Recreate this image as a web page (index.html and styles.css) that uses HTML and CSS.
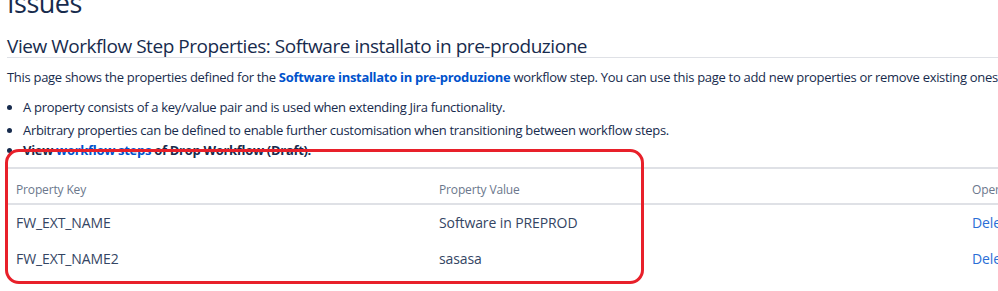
FILE: index.html
```html
<!DOCTYPE html>
<html lang="it">
<head>
<meta charset="utf-8">
<title>View Workflow Step Properties</title>
<link rel="stylesheet" href="styles.css">
</head>
<body>
<div class="page">
  <h1 class="page-title">Issues</h1>
  <h2 class="section-title">View Workflow Step Properties: Software installato in pre-produzione</h2>
  <p class="intro">This page shows the properties defined for the <a class="strong-link" href="#">Software installato in pre-produzione</a> workflow step. You can use this page to add new properties or remove existing ones.</p>
  <ul class="notes">
    <li>A property consists of a key/value pair and is used when extending Jira functionality.</li>
    <li>Arbitrary properties can be defined to enable further customisation when transitioning between workflow steps.</li>
    <li class="bold-note">View <a class="plain-link" href="#">workflow steps</a> of Drop Workflow (Draft).</li>
  </ul>
  <table class="props">
    <thead>
      <tr><th class="col-key">Property Key</th><th class="col-val">Property Value</th><th class="col-op">Operations</th></tr>
    </thead>
    <tbody>
      <tr><td>FW_EXT_NAME</td><td>Software in PREPROD</td><td><a class="op-link" href="#">Delete</a></td></tr>
      <tr><td>FW_EXT_NAME2</td><td>sasasa</td><td><a class="op-link" href="#">Delete</a></td></tr>
    </tbody>
  </table>
</div>
<div class="highlight"></div>
</body>
</html>
```
FILE: styles.css
```css
html, body {
  margin: 0;
  padding: 0;
  background: #ffffff;
  overflow: hidden;
}
body {
  font-family: "Open Sans", "Noto Sans", sans-serif;
  color: #172b4d;
  width: 998px;
  height: 291px;
  position: relative;
}
.page {
  padding-left: 7px;
  white-space: nowrap;
}
.page-title {
  font-size: 27px;
  font-weight: 500;
  letter-spacing: -0.5px;
  line-height: 30px;
  margin: -12px 0 0 0;
  color: #172b4d;
}
.section-title {
  font-size: 19px;
  font-weight: 400;
  letter-spacing: -0.45px;
  line-height: 22px;
  margin: 17px 0 0 0;
  padding-bottom: 0;
  border-bottom: 1px solid #dfe1e6;
  color: #172b4d;
}
.intro {
  font-size: 13px;
  letter-spacing: -0.3px;
  line-height: 20px;
  margin: 9px 0 0 0;
  color: #172b4d;
}
.strong-link {
  color: #0052cc;
  font-weight: 700;
  text-decoration: none;
}
.notes {
  margin: 9px 0 0 0;
  padding-left: 16px;
  font-size: 13px;
  letter-spacing: -0.3px;
  line-height: 23px;
}
.bold-note {
  font-weight: 700;
  line-height: 17px;
}
.plain-link {
  color: #0052cc;
  text-decoration: none;
}
.props {
  margin-top: 8px;
  margin-left: 1px;
  width: 1120px;
  border-collapse: collapse;
  border-top: 2px solid #dfe1e6;
}
.props th {
  text-align: left;
  font-size: 12px;
  font-weight: 400;
  letter-spacing: -0.15px;
  color: #6b778c;
  padding: 12px 8px 5px 8px;
  border-bottom: 2px solid #dfe1e6;
}
.props td {
  font-size: 14px;
  letter-spacing: -0.1px;
  color: #344563;
  padding: 8px 8px 9px 8px;
  line-height: 19px;
}
.col-key { width: 407px; }
.col-val { width: 517px; }
.op-link {
  color: #2a6ed6;
  text-decoration: none;
}
.highlight {
  position: absolute;
  left: 5px;
  top: 149px;
  width: 633px;
  height: 129px;
  border: 3px solid #e8202a;
  border-radius: 14px;
  pointer-events: none;
}
```
